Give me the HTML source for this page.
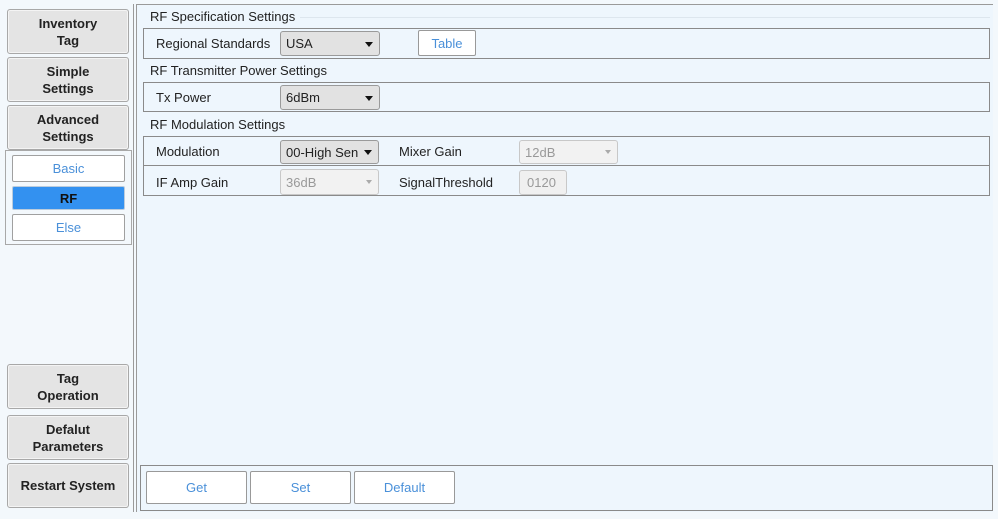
<!DOCTYPE html>
<html><head><meta charset="utf-8"><style>
*{box-sizing:border-box;margin:0;padding:0}
body{width:998px;height:519px;background:#f3f8fc;font-family:"Liberation Sans","DejaVu Sans",sans-serif;font-size:13px;color:#222;position:relative;overflow:hidden}
.a{position:absolute}
.nb{position:absolute;left:7px;width:122px;background:#e4e4e4;border:1px solid #a8a8a8;border-radius:3px;font-weight:bold;font-size:13px;text-align:center;display:flex;align-items:center;justify-content:center;line-height:17px;box-shadow:inset 0 0 0 1px #f4f4f4}
.sb{position:absolute;left:12px;width:113px;background:#fff;border:1px solid #a0a0a0;border-radius:2px;color:#4a90d9;text-align:center;font-size:13px;display:flex;align-items:center;justify-content:center}
.box{position:absolute;border:1px solid #8a8a8a;background:#eef6fd}
.lbl{position:absolute;font-size:13px;color:#222}
.sel{position:absolute;background:#e2e2e2;border:1px solid #9a9a9a;border-radius:3px;font-size:13px;padding-left:5px;display:flex;align-items:center}
.sel:after{content:"";position:absolute;right:6px;top:50%;margin-top:-2px;border-left:4px solid transparent;border-right:4px solid transparent;border-top:5px solid #111}
.dis{background:#f2f2f2;color:#999;border-color:#c8c8c8}
.dis:after{border-top-color:#aaa;border-left-width:3px;border-right-width:3px;border-top-width:4px}
.btn{position:absolute;background:#fff;border:1px solid #999;border-radius:2px;color:#4a90d9;display:flex;align-items:center;justify-content:center;font-size:13px}
</style></head><body>
<div class="a" style="left:0;top:4px;width:133px;height:515px;background:#f3f8fc"></div>
<div class="a" style="left:133px;top:4px;width:1px;height:508px;background:#9a9a9a"></div>
<div class="a" style="left:136px;top:4px;width:1px;height:508px;background:#9a9a9a"></div>
<div class="a" style="left:137px;top:4px;width:856px;height:508px;border-top:1px solid #9a9a9a;background:#eef6fd"></div>

<div class="nb" style="top:9px;height:45px">Inventory<br>Tag</div>
<div class="nb" style="top:57px;height:45px">Simple<br>Settings</div>
<div class="nb" style="top:105px;height:45px">Advanced<br>Settings</div>
<div class="a" style="left:5px;top:150px;width:127px;height:95px;border:1px solid #a8a8a8;background:#f3f8fc"></div>
<div class="sb" style="top:155px;height:27px">Basic</div>
<div class="sb" style="top:186px;height:24px;background:#3391f0;color:#111;font-weight:bold;border-color:#bcd">RF</div>
<div class="sb" style="top:214px;height:27px">Else</div>
<div class="nb" style="top:364px;height:45px">Tag<br>Operation</div>
<div class="nb" style="top:415px;height:45px">Defalut<br>Parameters</div>
<div class="nb" style="top:463px;height:45px">Restart System</div>

<div class="lbl" style="left:150px;top:9px">RF Specification Settings</div>
<div class="a" style="left:300px;top:17px;width:690px;height:1px;background:#dde6ee"></div>
<div class="box" style="left:143px;top:28px;width:847px;height:31px"></div>
<div class="lbl" style="left:156px;top:36px">Regional Standards</div>
<div class="sel" style="left:280px;top:31px;width:100px;height:25px">USA</div>
<div class="btn" style="left:418px;top:30px;width:58px;height:26px">Table</div>

<div class="lbl" style="left:150px;top:63px">RF Transmitter Power Settings</div>
<div class="box" style="left:143px;top:82px;width:847px;height:30px"></div>
<div class="lbl" style="left:156px;top:90px">Tx Power</div>
<div class="sel" style="left:280px;top:85px;width:100px;height:25px">6dBm</div>

<div class="lbl" style="left:150px;top:117px">RF Modulation Settings</div>
<div class="box" style="left:143px;top:136px;width:847px;height:30px"></div>
<div class="box" style="left:143px;top:165px;width:847px;height:31px"></div>
<div class="lbl" style="left:156px;top:144px">Modulation</div>
<div class="sel" style="left:280px;top:140px;width:99px;height:24px">00-High Sen</div>
<div class="lbl" style="left:399px;top:144px">Mixer Gain</div>
<div class="sel dis" style="left:519px;top:140px;width:99px;height:24px">12dB</div>
<div class="lbl" style="left:156px;top:175px">IF Amp Gain</div>
<div class="sel dis" style="left:280px;top:169px;width:99px;height:26px">36dB</div>
<div class="lbl" style="left:399px;top:175px">SignalThreshold</div>
<div class="sel dis" style="left:519px;top:170px;width:48px;height:25px;padding-left:7px;background:#f0f0f0">0120</div>
<style>.sel.dis[style*="48px"]:after{display:none}</style>

<div class="box" style="left:140px;top:465px;width:853px;height:46px"></div>
<div class="btn" style="left:146px;top:471px;width:101px;height:33px">Get</div>
<div class="btn" style="left:250px;top:471px;width:101px;height:33px">Set</div>
<div class="btn" style="left:354px;top:471px;width:101px;height:33px">Default</div>
</body></html>
